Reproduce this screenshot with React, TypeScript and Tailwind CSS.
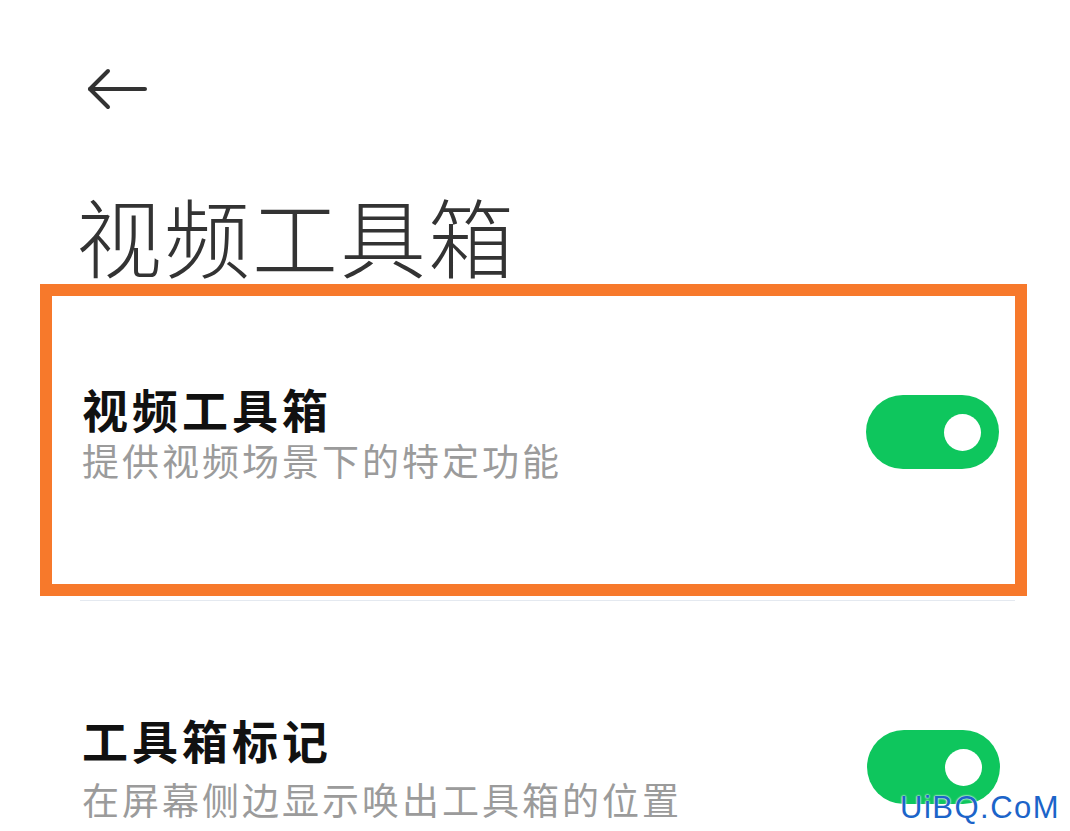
const cjk = "font-['Noto_Sans_CJK_SC','Noto_Sans',sans-serif]";

function Toggle() {
  return (
    <div className="flex h-[74px] w-[133px] shrink-0 items-center justify-end rounded-full bg-[#0ec65d] pr-[18px]">
      <div className="h-[37px] w-[37px] rounded-full bg-white" />
    </div>
  );
}

function SettingRow({ title, desc, gap }: { title: string; desc: string; gap: string }) {
  return (
    <div className="flex items-center justify-between">
      <div className="flex flex-col">
        <div className="text-[46px] leading-[46px] font-bold tracking-[4px] text-[#111]">{title}</div>
        <div className={`${gap} text-[37px] leading-[37px] tracking-[3px] text-[#9b9b9b]`}>{desc}</div>
      </div>
      <Toggle />
    </div>
  );
}

export default function App() {
  return (
    <div className={`relative h-[831px] w-[1070px] overflow-hidden bg-white ${cjk}`}>
      {/* back */}
      <div className="pl-[86px] pt-[68px]">
        <svg width="62" height="42" viewBox="0 0 62 42" fill="none" stroke="#333" strokeWidth="4" strokeLinecap="round" strokeLinejoin="round">
          <path d="M4 21H59" />
          <path d="M22 3L4 21L22 39" />
        </svg>
      </div>

      <h1 className="mt-[82px] pl-[76px] text-[86px] leading-[86px] font-light tracking-[2px] text-[#333]">视频工具箱</h1>

      {/* highlighted item */}
      <div className="ml-[40px] mt-[6px] h-[312px] w-[987px] border-[12px] border-[#f7792b] pl-[30px] pr-[16px] pt-[89px]">
        <SettingRow title="视频工具箱" desc="提供视频场景下的特定功能" gap="mt-[11px]" />
      </div>
      <div className="ml-[80px] mt-[4px] h-px w-[935px] bg-[#e4e9f0]" />

      <div className="mt-[115px] pl-[82px] pr-[70px]">
        <SettingRow title="工具箱标记" desc="在屏幕侧边显示唤出工具箱的位置" gap="mt-[19px]" />
      </div>

      {/* watermark */}
      <div className="absolute left-[900px] top-[792px] font-['Liberation_Sans',sans-serif] text-[31px] leading-none tracking-[1.5px] text-[#1c64c9] [text-shadow:0_0_2px_#fff,0_0_2px_#fff]">
        UiBQ.CoM
      </div>
    </div>
  );
}
